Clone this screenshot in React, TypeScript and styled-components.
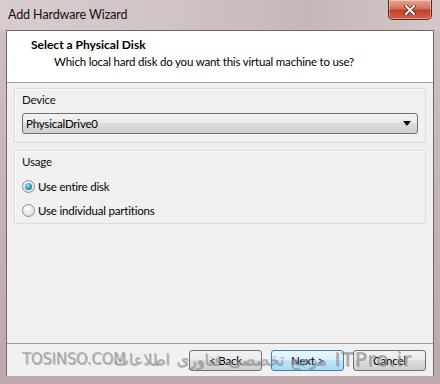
import React from "react";
import styled, { createGlobalStyle } from "styled-components";

const GlobalStyle = createGlobalStyle`
  html, body {
    margin: 0;
    padding: 0;
    background: #c9b9ba;
  }
  body {
    font-family: Lato, "Open Sans", "DejaVu Sans", sans-serif;
    font-size: 11.5px;
    letter-spacing: -0.2px;
    color: #000;
  }
`;

const Window = styled.div`
  position: relative;
  width: 440px;
  height: 384px;
  display: flex;
  flex-direction: column;
  background: linear-gradient(180deg, #d9cfd0 0%, #cdbfc0 10%, #c4b2b3 60%, #bfa9aa 100%);
  overflow: hidden;
`;

const TitleBar = styled.div`
  height: 30px;
  display: flex;
  justify-content: space-between;
  align-items: flex-start;
  padding: 0 8px 0 8px;
  box-sizing: border-box;
  background: linear-gradient(90deg, #d8cccd 0%, #d0c3c4 40%, #c7b6b7 70%, #d3c8c9 100%);
`;

const TitleText = styled.div`
  margin-top: 7px;
  font-size: 12.5px;
  letter-spacing: -0.1px;
  color: #111;
`;

const CloseButton = styled.div`
  width: 44px;
  height: 20px;
  display: flex;
  align-items: center;
  justify-content: center;
  box-sizing: border-box;
  border: 1px solid #5a2a22;
  border-top: none;
  border-radius: 0 0 5px 5px;
  background: linear-gradient(180deg, #e7a597 0%, #d3705e 45%, #c4402a 55%, #d3614b 100%);
  box-shadow: inset 0 0 0 1px rgba(255, 255, 255, 0.35);
`;

const Client = styled.div`
  flex: 1;
  margin: 0 6px 0 6px;
  display: flex;
  flex-direction: column;
  background: #f0f0f0;
  border: 1px solid #6f6868;
  border-bottom: none;
`;

const Header = styled.div`
  height: 52px;
  box-sizing: border-box;
  background: #fff;
  border-bottom: 1px solid #a0a0a0;
  padding: 6px 0 0 24px;
`;

const HeaderTitle = styled.div`
  font-weight: 700;
  font-size: 12px;
  letter-spacing: 0;
  line-height: 16px;
`;

const HeaderSub = styled.div`
  margin: 1px 0 0 23px;
  line-height: 16px;
`;

const Body = styled.div`
  flex: 1;
  display: flex;
  flex-direction: column;
  gap: 7px;
  padding: 5px 7px 0 7px;
`;

const Group = styled.div<{ $h: number }>`
  height: ${(p) => p.$h}px;
  box-sizing: border-box;
  border: 1px solid #dcdcdc;
  box-shadow: inset 1px 1px 0 #fff;
  border-radius: 2px;
  padding: 3px 7px 0 7px;
  display: flex;
  flex-direction: column;
`;

const GroupLabel = styled.div`
  line-height: 16px;
  color: #111;
`;

const Combo = styled.div`
  margin-top: 5px;
  height: 21px;
  box-sizing: border-box;
  display: flex;
  align-items: center;
  justify-content: space-between;
  padding: 0 6px 0 3px;
  border: 1px solid #707070;
  border-radius: 3px;
  background: linear-gradient(180deg, #f2f2f2 0%, #ebebeb 45%, #dddddd 50%, #cfcfcf 100%);
`;

const RadioRow = styled.div`
  display: flex;
  align-items: center;
  gap: 3px;
  height: 16px;
  margin-top: 8px;
  &:first-of-type {
    margin-top: 6px;
  }
`;

const RadioDot = styled.div<{ $checked?: boolean }>`
  width: 13px;
  height: 13px;
  box-sizing: border-box;
  border-radius: 50%;
  border: 1px solid #8e8f8f;
  background: radial-gradient(circle at 40% 35%, #ffffff 0%, #e6e6e6 60%, #cfcfcf 100%);
  display: flex;
  align-items: center;
  justify-content: center;
  &::after {
    content: "";
    display: ${(p) => (p.$checked ? "block" : "none")};
    width: 7px;
    height: 7px;
    border-radius: 50%;
    background: radial-gradient(circle at 40% 35%, #a8e4fb 0%, #2c8fc9 55%, #155c8e 100%);
  }
`;

const Footer = styled.div`
  height: 33px;
  box-sizing: border-box;
  border-top: 1px solid #a0a0a0;
  display: flex;
  justify-content: flex-end;
  align-items: flex-start;
  gap: 9px;
  padding: 6px 7px 0 0;
`;

const Button = styled.div<{ $focused?: boolean }>`
  width: 73px;
  height: 21px;
  box-sizing: border-box;
  display: flex;
  align-items: center;
  justify-content: center;
  border-radius: 3px;
  border: 1px solid ${(p) => (p.$focused ? "#3c7fb1" : "#707070")};
  background: ${(p) =>
    p.$focused
      ? "linear-gradient(180deg, #eaf6fd 0%, #d9f0fc 45%, #bee6fd 50%, #a7d9f5 100%)"
      : "linear-gradient(180deg, #f2f2f2 0%, #ebebeb 45%, #dddddd 50%, #cfcfcf 100%)"};
`;

const BottomFrame = styled.div`
  height: 8px;
`;

const Watermark = styled.div`
  position: absolute;
  left: 22px;
  top: 348px;
  width: 390px;
  height: 22px;
  display: flex;
  align-items: center;
  pointer-events: none;
  font-family: "DejaVu Sans", "Liberation Sans", sans-serif;
  letter-spacing: 0;
  color: rgba(150, 150, 150, 0.7);
  text-shadow: 1px 1px 0 rgba(80, 80, 80, 0.35);
`;

const WmLatin = styled.span`
  font-size: 15px;
  letter-spacing: -0.3px;
`;

const WmPersian = styled.span`
  font-size: 16px;
  direction: rtl;
  margin-left: -12px;
  width: 215px;
  text-align: justify;
  text-align-last: justify;
`;

const WmSite = styled.span`
  margin-left: 8px;
  font-size: 20px;
  letter-spacing: 1px;
`;

export default function App() {
  return (
    <>
      <GlobalStyle />
      <Window>
        <TitleBar>
          <TitleText>Add Hardware Wizard</TitleText>
          <CloseButton>
            <svg width="12" height="10" viewBox="0 0 12 10">
              <path d="M2 1 L10 9 M10 1 L2 9" stroke="#5a1e14" strokeWidth="3.4" strokeLinecap="square" />
              <path d="M2 1 L10 9 M10 1 L2 9" stroke="#fff" strokeWidth="2" strokeLinecap="square" />
            </svg>
          </CloseButton>
        </TitleBar>
        <Client>
          <Header>
            <HeaderTitle>Select a Physical Disk</HeaderTitle>
            <HeaderSub>Which local hard disk do you want this virtual machine to use?</HeaderSub>
          </Header>
          <Body>
            <Group $h={55}>
              <GroupLabel>Device</GroupLabel>
              <Combo>
                <span>PhysicalDrive0</span>
                <svg width="8" height="5" viewBox="0 0 8 5">
                  <path d="M0 0 H8 L4 5 Z" fill="#000" />
                </svg>
              </Combo>
            </Group>
            <Group $h={74}>
              <GroupLabel>Usage</GroupLabel>
              <RadioRow>
                <RadioDot $checked />
                <span>Use entire disk</span>
              </RadioRow>
              <RadioRow>
                <RadioDot />
                <span>Use individual partitions</span>
              </RadioRow>
            </Group>
          </Body>
          <Footer>
            <Button>&lt; Back</Button>
            <Button $focused>Next &gt;</Button>
            <Button>Cancel</Button>
          </Footer>
        </Client>
        <BottomFrame />
        <Watermark>
          <WmLatin>TOSINSO.COM</WmLatin>
          <WmPersian>مرجع تخصصی فناوری اطلاعات</WmPersian>
          <WmSite>ITPro.ir</WmSite>
        </Watermark>
      </Window>
    </>
  );
}
